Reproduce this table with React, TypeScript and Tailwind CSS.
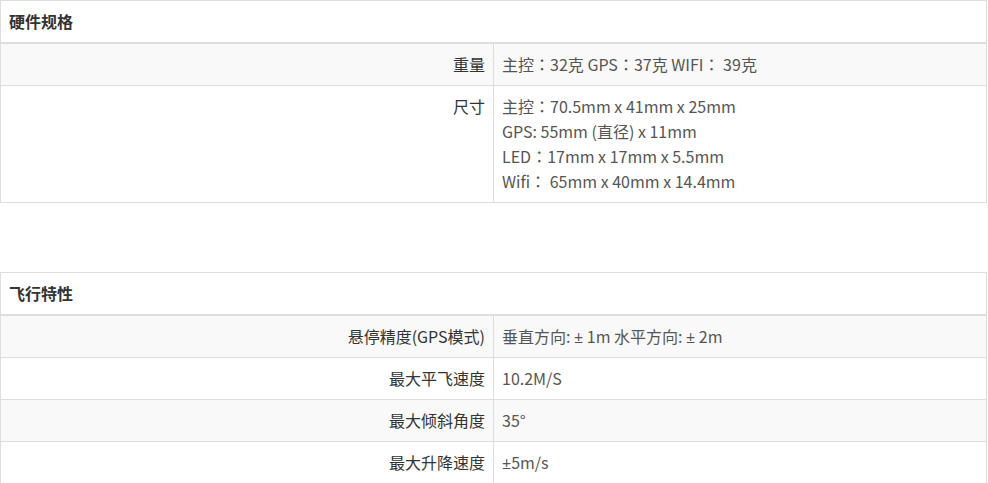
import React from "react";

type Row = { label: string; lines: string[] };

const hardware: Row[] = [
  { label: "重量", lines: ["主控：32克 GPS：37克 WIFI： 39克"] },
  {
    label: "尺寸",
    lines: [
      "主控：70.5mm x 41mm x 25mm",
      "GPS: 55mm (直径) x 11mm",
      "LED：17mm x 17mm x 5.5mm",
      "Wifi： 65mm x 40mm x 14.4mm",
    ],
  },
];

const flight: Row[] = [
  { label: "悬停精度(GPS模式)", lines: ["垂直方向: ± 1m 水平方向: ± 2m"] },
  { label: "最大平飞速度", lines: ["10.2M/S"] },
  { label: "最大倾斜角度", lines: ["35°"] },
  { label: "最大升降速度", lines: ["±5m/s"] },
];

// ± drawn by a Latin face (narrow), full-width colon centred like the TC face
const Line = ({ text }: { text: string }) => {
  const parts = text.split(/(±|：)/);
  return (
    <div className="h-[25px]">
      {parts.map((p, i) =>
        p === "±" ? (
          <span key={i} className="font-['Open_Sans'] leading-none">
            ±
          </span>
        ) : p === "：" ? (
          <span key={i} className="font-['Noto_Sans_CJK_TC'] leading-none">
            ：
          </span>
        ) : (
          <React.Fragment key={i}>{p}</React.Fragment>
        )
      )}
    </div>
  );
};

const SpecTable = ({ title, rows }: { title: string; rows: Row[] }) => (
  <table className="w-[987px] border-collapse border border-[#ddd] text-[16px] leading-[25px]">
    <thead>
      <tr>
        <th
          colSpan={2}
          className="border-b-2 border-[#ddd] px-2 py-2 text-left font-bold text-[#333]"
        >
          {title}
        </th>
      </tr>
    </thead>
    <tbody>
      {rows.map((row, i) => (
        <tr
          key={row.label}
          className={i % 2 === 0 ? "bg-[#f9f9f9]" : "bg-white"}
        >
          <td className="w-[493px] border-t border-r border-[#ddd] px-2 py-2 text-right align-top text-[#333]">
            {row.label}
          </td>
          <td className="border-t border-[#ddd] px-2 py-2 align-top text-[#555]">
            {row.lines.map((line) => (
              <Line key={line} text={line} />
            ))}
          </td>
        </tr>
      ))}
    </tbody>
  </table>
);

export default function App() {
  return (
    <div className="bg-white font-['Noto_Sans_CJK_SC',sans-serif]">
      <SpecTable title="硬件规格" rows={hardware} />
      <div className="h-[69px]" />
      <SpecTable title="飞行特性" rows={flight} />
    </div>
  );
}
